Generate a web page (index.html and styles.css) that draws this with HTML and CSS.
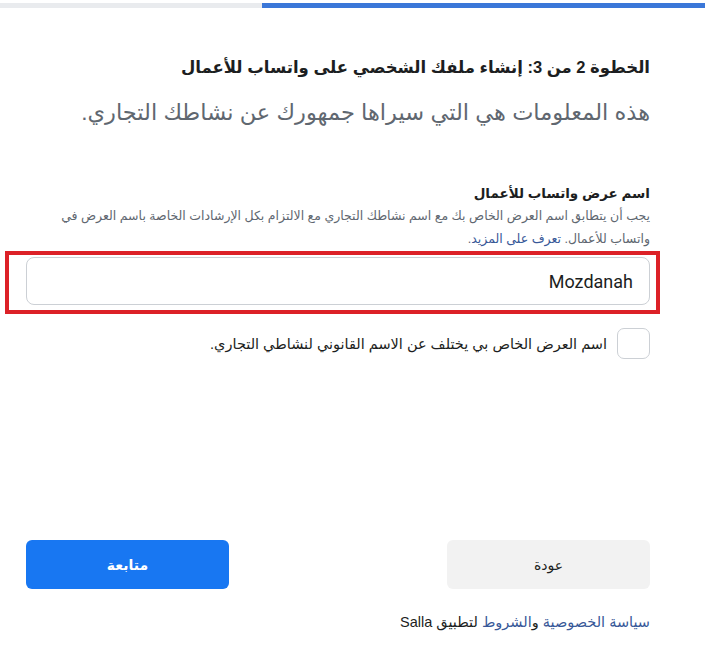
FILE: index.html
```html
<!DOCTYPE html>
<html lang="ar" dir="rtl">
<head>
<meta charset="utf-8" />
<meta name="viewport" content="width=device-width, initial-scale=1" />
<title>إنشاء ملف واتساب للأعمال</title>
<link rel="stylesheet" href="styles.css">
</head>
<body>

<div class="progress">
	<div class="progressFill"></div>
</div>

<div class="stepPage">
	<div class="stepTitle">الخطوة 2 من 3: إنشاء ملفك الشخصي على واتساب للأعمال</div>
	<div class="stepSubtitle">هذه المعلومات هي التي سيراها جمهورك عن نشاطك التجاري.</div>

	<div class="field">
		<div class="fieldLabel">اسم عرض واتساب للأعمال</div>
		<div class="fieldHelp">
			يجب أن يتطابق اسم العرض الخاص بك مع اسم نشاطك التجاري مع الالتزام بكل الإرشادات الخاصة باسم العرض في واتساب للأعمال. <a href="#">تعرف على المزيد</a>.
		</div>
		<div class="fieldInput highlighted">
			<input type="text" value="Mozdanah" dir="ltr" />
		</div>
	</div>

	<label class="checkRow">
		<span class="checkBox"></span>
		<span>اسم العرض الخاص بي يختلف عن الاسم القانوني لنشاطي التجاري.</span>
	</label>

	<div class="buttons">
		<button class="btnBack">عودة</button>
		<button class="btnNext">متابعة</button>
	</div>

	<div class="footer">
		<a href="#">سياسة الخصوصية</a> و<a href="#">الشروط</a> لتطبيق Salla
	</div>
</div>

</body>
</html>
```

FILE: styles.css
```css
html, body {
	margin: 0;
	padding: 0;
	background: #fff;
	font-family: "Liberation Sans", "DejaVu Sans", sans-serif;
	color: #1c1e21;
}

.progress {
	margin-top: 3px;
	height: 5px;
	background: #e9ebee;
}

.progressFill {
	width: 62.8%;
	height: 100%;
	background: #3b77d8;
}

.stepPage {
	padding: 0 55px 0 26px;
}

.stepTitle {
	margin-top: 47px;
	font-size: 16.5px;
	line-height: 24px;
	font-weight: bold;
}

.stepSubtitle {
	margin-top: 18px;
	font-size: 22.5px;
	line-height: 32px;
	color: #606770;
}

.field {
	margin-top: 54px;
}

.fieldLabel {
	font-size: 13.5px;
	line-height: 22px;
	font-weight: bold;
}

.fieldHelp {
	font-size: 12.5px;
	line-height: 23px;
	color: #606770;
}

.fieldHelp a {
	color: #385898;
	text-decoration: none;
}

.fieldInput {
	position: relative;
	margin-top: 6px;
}

.fieldInput input {
	box-sizing: border-box;
	width: 100%;
	height: 48px;
	border: 1px solid #ccd0d5;
	border-radius: 8px;
	padding: 0 16px;
	font-family: Roboto, "Liberation Sans", sans-serif;
	font-size: 18px;
	color: #1c1e21;
	text-align: right;
	outline: none;
}

.highlighted::after {
	content: "";
	position: absolute;
	top: -6px;
	bottom: -9px;
	left: -21px;
	right: -10px;
	border: 4px solid #dc2127;
	pointer-events: none;
}

.checkRow {
	margin-top: 23px;
	display: flex;
	align-items: center;
	gap: 10px;
	font-size: 14.5px;
}

.checkBox {
	width: 31px;
	height: 29px;
	border: 1px solid #ccd0d5;
	border-radius: 7px;
}

.buttons {
	margin-top: 181px;
	display: flex;
	justify-content: space-between;
}

.buttons button {
	width: 203px;
	height: 49px;
	border: none;
	border-radius: 6px;
	font-family: "Liberation Sans", "DejaVu Sans", sans-serif;
	font-size: 14px;
	cursor: pointer;
}

.btnBack {
	background: #f2f2f2;
	color: #1c1e21;
}

.btnNext {
	background: #1877f2;
	color: #fff;
	font-weight: bold;
}

.footer {
	margin-top: 23px;
	font-size: 14.5px;
	line-height: 20px;
}

.footer a {
	color: #385898;
	text-decoration: none;
}
```
